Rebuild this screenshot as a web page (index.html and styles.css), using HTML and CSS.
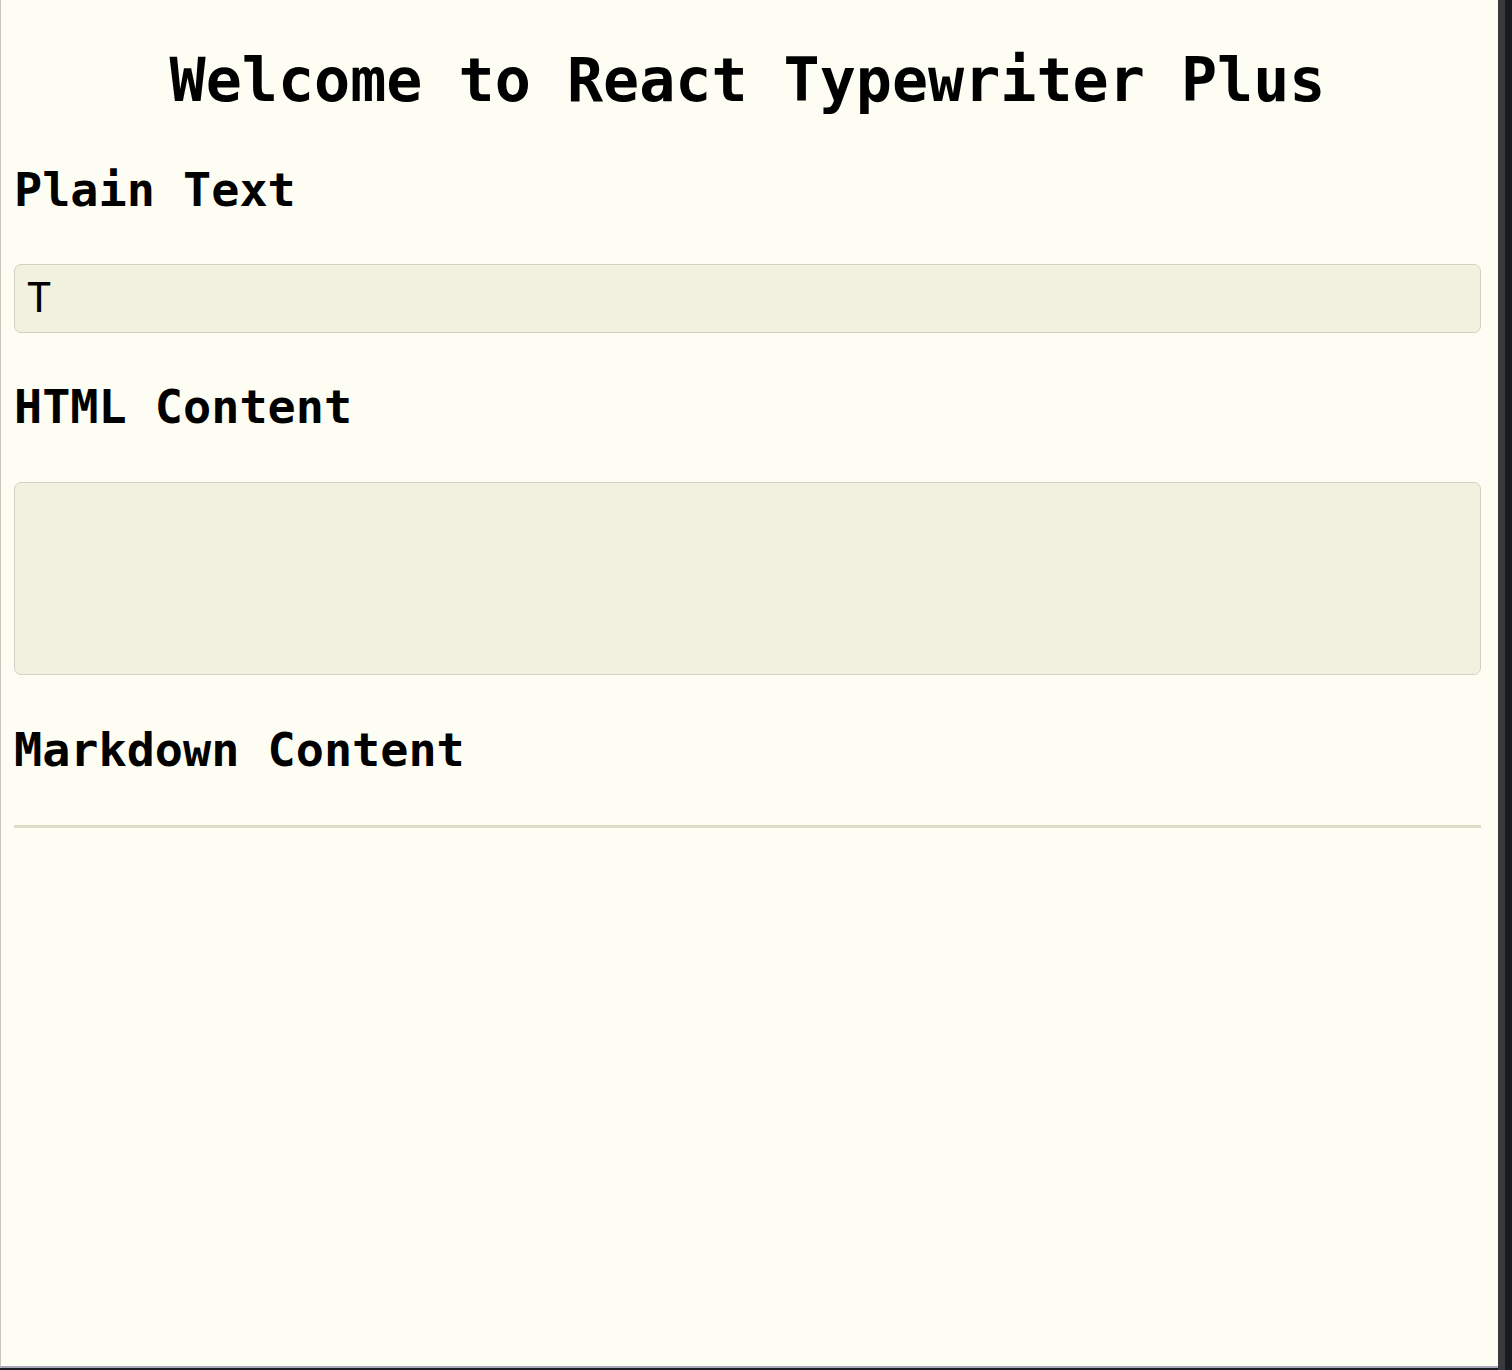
FILE: index.html
```html
<!DOCTYPE html>
<html lang="en">
<head>
<meta charset="utf-8">
<title>React Typewriter Plus</title>
<link rel="stylesheet" href="styles.css">
</head>
<body>
<div class="shell">
  <main class="page">
    <h1 class="title">Welcome to React Typewriter Plus</h1>
    <section class="demo">
      <h2 class="heading heading-plain">Plain Text</h2>
      <div class="box box-plain">T</div>
    </section>
    <section class="demo">
      <h2 class="heading heading-html">HTML Content</h2>
      <div class="box box-html"></div>
    </section>
    <section class="demo">
      <h2 class="heading heading-md">Markdown Content</h2>
      <hr class="rule">
    </section>
  </main>
  <div class="edge"><div class="edge-a"></div><div class="edge-b"></div></div>
</div>
</body>
</html>
```
FILE: styles.css
```css
html, body {
  margin: 0;
  padding: 0;
  height: 100%;
}
body {
  background: #1c1c22;
  font-family: "DejaVu Sans Mono", "Liberation Mono", monospace;
  color: #000;
}
.shell {
  display: flex;
  width: 1512px;
  height: 1370px;
}
.page {
  box-sizing: border-box;
  width: 1498px;
  height: 1368px;
  flex: none;
  background: #fdfdf4;
  border-left: 1px solid #c8c8c0;
  border-bottom: 2px solid #a8a8b8;
  padding: 0 17px 0 13px;
  display: flex;
  flex-direction: column;
}
.title {
  margin: 45px 0 0;
  font-size: 60px;
  line-height: 70px;
  font-weight: bold;
  text-align: center;
}
.demo {
  display: flex;
  flex-direction: column;
}
.heading {
  margin: 48px 0 46px;
  font-size: 46.8px;
  line-height: 55px;
  font-weight: bold;
}
.heading-html {
  margin-top: 47px;
  margin-bottom: 47px;
}
.heading-md {
  margin-top: 48px;
  margin-bottom: 47px;
}
.box {
  box-sizing: border-box;
  background: #f1f1df;
  border: 1px solid #d2d2c2;
  border-radius: 7px;
}
.box-plain {
  height: 69px;
  padding: 10px 12px;
  font-size: 40px;
  line-height: 47px;
}
.box-html {
  height: 193px;
}
.rule {
  margin: 0;
  border: none;
  height: 3px;
  background: #dcdcc8;
}
.edge {
  display: flex;
  flex: 1;
}
.edge-a {
  width: 7px;
  background: #3a3a3c;
}
.edge-b {
  flex: 1;
  background: #1a1a22;
}
```
